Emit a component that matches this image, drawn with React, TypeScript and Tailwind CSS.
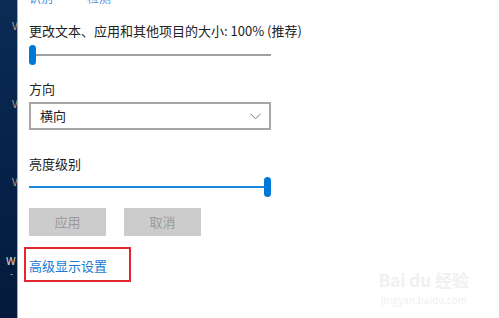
export default function App() {
  const font = { fontFamily: '"Microsoft YaHei", "Noto Sans CJK SC", sans-serif' };
  return (
    <div className="flex h-[318px] w-[499px] overflow-hidden bg-white" style={font}>
      {/* desktop edge */}
      <div className="relative w-[17px] shrink-0 bg-gradient-to-b from-[#0b2c55] via-[#06224a] to-[#051a3c]">
        <span className="absolute left-[12px] top-[18px] text-[10px] text-[#b8a98a]">V</span>
        <span className="absolute left-[12px] top-[96px] text-[10px] text-[#b8a98a]">V</span>
        <span className="absolute left-[12px] top-[174px] text-[10px] text-[#b8a98a]">V</span>
        <span className="absolute left-[6px] top-[252px] text-[11px] text-[#e0d6c0]">W</span>
        <span className="absolute left-[10px] top-[267px] text-[9px] text-[#c0c0c0]">-</span>
      </div>
      <div className="w-px shrink-0 bg-[#7fb4e6]" />

      <div className="relative flex-1 pl-[11px]">
        <div className="mt-[-9px] flex gap-[34px] text-[12px] leading-[14px] text-[#4a90d8]">
          <span>识别</span>
          <span>检测</span>
        </div>

        <div className="mt-[18px] text-[13px] leading-[16px] text-[#222]">
          更改文本、应用和其他项目的大小: 100% (推荐)
        </div>
        <div className="mt-[6px] flex h-[20px] w-[242px] items-center">
          <div className="h-[20px] w-[7px] rounded-full bg-[#0078d7]" />
          <div className="h-[2px] flex-1 bg-[#a0a0a0]" />
        </div>

        <div className="mt-[16px] text-[13px] leading-[16px] text-[#222]">方向</div>
        <div className="mt-[5px] flex h-[28px] w-[242px] items-center justify-between border-2 border-[#a6a6a6] pl-[9px] pr-[8px]">
          <span className="text-[13px] text-[#222]">横向</span>
          <svg width="11" height="7" viewBox="0 0 11 7" fill="none">
            <path d="M0.5 0.8 L5.5 5.8 L10.5 0.8" stroke="#777" strokeWidth="1" />
          </svg>
        </div>

        <div className="mt-[26px] text-[13px] leading-[16px] text-[#222]">亮度级别</div>
        <div className="mt-[5px] flex h-[20px] w-[242px] items-center">
          <div className="h-[2px] flex-1 bg-[#1e88de]" />
          <div className="h-[20px] w-[7px] rounded-full bg-[#0078d7]" />
        </div>

        <div className="mt-[11px] flex gap-[18px]">
          <div className="flex h-[28px] w-[77px] items-center justify-center bg-[#cccccc] text-[13px] text-[#9a9a9a]">应用</div>
          <div className="flex h-[28px] w-[77px] items-center justify-center bg-[#cccccc] text-[13px] text-[#9a9a9a]">取消</div>
        </div>

        <div className="ml-[-5px] mt-[11px] flex h-[35px] w-[107px] items-center border-2 border-[#e32631] pl-[3px] pt-[2px]">
          <span className="text-[13px] text-[#1a7ad6]">高级显示设置</span>
        </div>

        <div className="absolute right-[30px] top-[270px] flex flex-col items-center gap-[4px] text-[#f0f0f0]">
          <div className="text-[17px] font-bold leading-[20px]">Bai du 经验</div>
          <div className="text-[10px] leading-[11px]">jingyan.baidu.com</div>
        </div>
      </div>
    </div>
  );
}
